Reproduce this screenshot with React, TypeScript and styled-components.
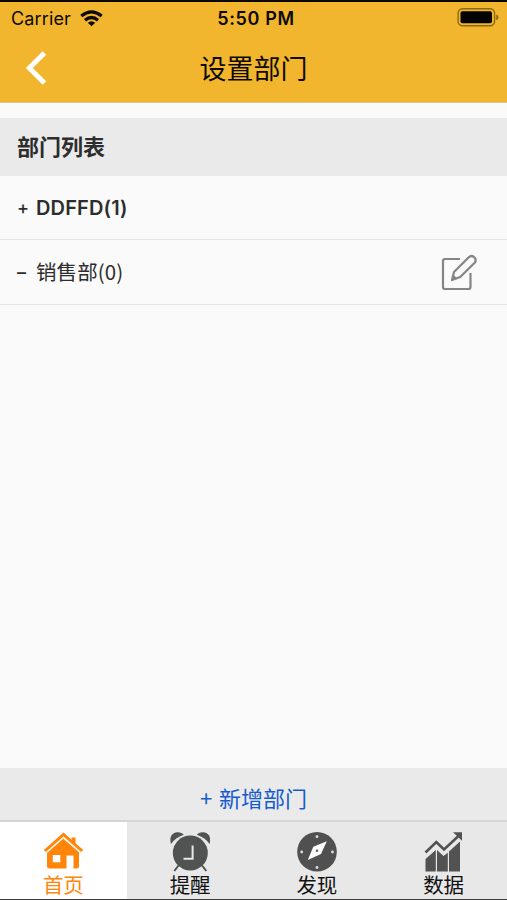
import React from "react";
import styled, { createGlobalStyle } from "styled-components";

const GlobalStyle = createGlobalStyle`
  * { box-sizing: border-box; }
  body { margin: 0; background: #fafafa; }
  svg { display: block; flex: none; }
`;

const cjk = `"Noto Sans CJK SC", sans-serif`;

const Screen = styled.div`
  display: flex;
  flex-direction: column;
  width: 507px;
  height: 900px;
  overflow: hidden;
  background: #fafafa;
  color: #2d2d2d;
  font-family: Inter, ${cjk};
  border-top: 2px solid #0c0700;
  border-bottom: 1px solid #3c3c3c;
`;

const Header = styled.header`
  height: 101px;
  flex: none;
  background: #f1b62d;
  border-bottom: 1px solid #dfc68d;
  color: #0d0900;
`;

const StatusBar = styled.div`
  display: grid;
  grid-template-columns: 1fr auto 1fr;
  align-items: center;
  height: 34px;
  padding: 0 8px 0 11px;
`;

const Carrier = styled.div`
  display: flex;
  align-items: center;
  gap: 9px;
  font-size: 18px;
  line-height: 34px;
  letter-spacing: 0.14px;

  svg {
    margin-bottom: 2px;
  }
`;

const Clock = styled.div`
  padding-left: 2px;
  font-size: 18px;
  font-weight: 600;
  line-height: 34px;
  letter-spacing: 0.65px;
`;

const BatterySlot = styled.div`
  justify-self: end;
  padding-bottom: 3px;
`;

const TitleBar = styled.div`
  display: grid;
  grid-template-columns: 72px 1fr 72px;
  align-items: center;
  height: 66px;
  padding-bottom: 2px;
`;

const BackButton = styled.button`
  display: flex;
  padding: 0 0 0 25px;
  border: 0;
  background: none;
`;

const Title = styled.h1`
  margin: 0;
  text-align: center;
  font: 400 27px/40px ${cjk};
`;

const SectionTitle = styled.h2`
  margin: 15px 0 0;
  padding: 0 17px;
  height: 58px;
  flex: none;
  background: #eaeaea;
  font: 700 22px/55px ${cjk};
`;

const Row = styled.div<{ $height: number; $strong?: boolean }>`
  display: flex;
  align-items: center;
  justify-content: space-between;
  height: ${(p) => p.$height}px;
  flex: none;
  padding: 0 30px 0 17px;
  border-bottom: 1px solid #e4e4e4;
  font-weight: ${(p) => (p.$strong ? 600 : 400)};
`;

const Label = styled.span<{ $cjk?: boolean }>`
  display: flex;
  align-items: center;
  padding-bottom: ${(p) => (p.$cjk ? 2 : 0)}px;
  font-size: ${(p) => (p.$cjk ? 20.5 : 20)}px;
  line-height: 30px;
  letter-spacing: ${(p) => (p.$cjk ? 0.1 : 0.15)}px;
  font-family: ${(p) => (p.$cjk ? cjk : `Inter, ${cjk}`)};
`;

const Sign = styled.span<{ $dash?: boolean }>`
  width: 19px;
  padding-top: ${(p) => (p.$dash ? 3 : 1)}px;
  font: 500 18px/30px Inter, sans-serif;
`;

const EditButton = styled.button`
  padding: 0;
  border: 0;
  background: none;
`;

const List = styled.main`
  flex: 1;
  display: flex;
  flex-direction: column;
`;

const AddButton = styled.button`
  height: 54px;
  flex: none;
  padding: 6px 0 0;
  border: 0;
  border-bottom: 2px solid #d5d5d5;
  background: #eaeaea;
  color: #155bd0;
  font: 400 22px/46px ${cjk};
  word-spacing: 2px;
`;

const TabBar = styled.nav`
  display: grid;
  grid-template-columns: repeat(4, 1fr);
  height: 77px;
  flex: none;
  background: #e8e8e8;
`;

const Tab = styled.div<{ $active?: boolean }>`
  display: flex;
  flex-direction: column;
  align-items: center;
  padding-top: 10px;
  background: ${(p) => (p.$active ? "#fff" : "transparent")};
  color: ${(p) => (p.$active ? "#ff850b" : "#111")};
  font: 400 20.5px/24px ${cjk};
`;

const WifiIcon = () => (
  <svg width="23" height="17" viewBox="0 0 23 17" fill="none" stroke="#0d0900" strokeWidth="3.3">
    <path d="M1.3 6Q11.5-2.2 21.7 6M5 10.3Q11.5 4.8 18 10.3" />
    <path d="M7.8 12.8Q11.5 9.6 15.2 12.8L11.5 16.3Z" fill="#0d0900" stroke="none" />
  </svg>
);

const BatteryIcon = () => (
  <svg width="42" height="19" viewBox="0 0 42 19">
    <rect x="1.1" y=".8" width="36.5" height="17" rx="4.5" fill="none" stroke="#8c6918" strokeWidth="1.4" />
    <rect x="3.5" y="3.3" width="31.5" height="12" rx="2" fill="#050300" />
    <path d="M39.2 6.5Q41.5 7.3 41.5 9.4T39.2 12.3Z" fill="#8c6918" />
  </svg>
);

const BackIcon = () => (
  <svg width="22" height="34" viewBox="0 0 22 34" fill="none" stroke="#fff" strokeWidth="5">
    <path d="M19.5 2L4.3 17L19.5 32" />
  </svg>
);

const EditIcon = () => (
  <svg width="37" height="37" viewBox="0 0 37 37" fill="none" stroke="#858585" strokeWidth="2.2" strokeLinejoin="round">
    <path d="M20 5H5Q3 5 3 7V33Q3 35 5 35H28.5Q30.5 35 30.5 33V19" />
    <path d="M12 26L14 18L28.8 3.3Q31.3 .8 34.1 3.1T34.7 8.8L20.2 23Z" />
    <path d="M11.5 26.5L13 20.5L17.5 24.5Z" fill="#858585" stroke="none" />
  </svg>
);

const HomeIcon = () => (
  <svg width="40" height="40" viewBox="0 0 40 40" fill="#ff850b">
    <path fillRule="evenodd" d="M4 20L20 6.5L36 20V34Q36 36.5 33.5 36.5H30.5V23.5H23.5V36.5H6.5Q4 36.5 4 34ZM9.8 23V30.2H17.3V23Z" />
    <path d="M28.5 5.5H32.5V14L28.5 10Z" />
    <path d="M2.5 20.2L20.5 4.4L38.5 20.2" fill="none" stroke="#fff3df" strokeWidth="3.2" />
    <path d="M1.8 19L20.5 2.5L39.2 19" fill="none" stroke="#ff850b" strokeWidth="3" />
  </svg>
);

const AlarmIcon = () => (
  <svg width="40" height="40" viewBox="0 0 40 40" fill="#505352">
    <circle cx="20.3" cy="21" r="17.5" />
    <path d="M1 12C-1 5 2 .7 7 .2C10-.1 12.5 1 13.8 2.8C8 4.7 4 7.7 1 12ZM39.6 12C41.6 5 38.6 .7 33.6 .2C30.6-.1 28.1 1 26.8 2.8C32.6 4.7 36.6 7.7 39.6 12Z" />
    <path d="M8.5 33.5L4.3 39M32.1 33.5L36.3 39" stroke="#505352" strokeWidth="2" />
    <path d="M22.6 13.5V26.7H13.5" fill="none" stroke="#e8e8e8" strokeWidth="2" />
  </svg>
);

const CompassIcon = () => (
  <svg width="40" height="40" viewBox="0 0 40 40">
    <circle cx="20" cy="19.8" r="19.8" fill="#505050" />
    <path d="M29.8 9.2L24 22L10.8 28L16.3 14.7Z" fill="#fff" />
    <g fill="#dedede">
      <circle cx="20" cy="4.7" r="1.4" />
      <circle cx="20" cy="35.5" r="1.4" />
      <circle cx="4.7" cy="20" r="1.4" />
      <circle cx="35.5" cy="20" r="1.4" />
    </g>
    <circle cx="20" cy="18.7" r="1.3" fill="#606060" />
  </svg>
);

const ChartIcon = () => (
  <svg width="40" height="40" viewBox="0 0 40 40" fill="#525252">
    <path d="M1.5 27L11.8 18V39.5H1.5ZM13 18L19.5 24L23.8 20.7V39.5H13ZM25 19.5L36 9.5V39.5H25Z" />
    <path d="M1.5 20.5L12.3 10L20 17.5L34.5 4" fill="none" stroke="#525252" strokeWidth="2.6" />
    <path d="M29 .2H38V8.7Z" />
  </svg>
);

const tabs = [
  { label: "首页", icon: <HomeIcon />, active: true },
  { label: "提醒", icon: <AlarmIcon /> },
  { label: "发现", icon: <CompassIcon /> },
  { label: "数据", icon: <ChartIcon /> },
];

export default function App() {
  return (
    <Screen>
      <GlobalStyle />
      <Header>
        <StatusBar>
          <Carrier>Carrier<WifiIcon /></Carrier>
          <Clock>5:50 PM</Clock>
          <BatterySlot><BatteryIcon /></BatterySlot>
        </StatusBar>
        <TitleBar>
          <BackButton aria-label="返回"><BackIcon /></BackButton>
          <Title>设置部门</Title>
        </TitleBar>
      </Header>
      <List>
        <SectionTitle>部门列表</SectionTitle>
        <Row $height={64} $strong>
          <Label><Sign>+</Sign>DDFFD(1)</Label>
        </Row>
        <Row $height={65}>
          <Label $cjk><Sign $dash>–</Sign>销售部(0)</Label>
          <EditButton aria-label="编辑"><EditIcon /></EditButton>
        </Row>
      </List>
      <AddButton>+ 新增部门</AddButton>
      <TabBar>
        {tabs.map((tab) => (
          <Tab key={tab.label} $active={tab.active}>
            {tab.icon}
            <span>{tab.label}</span>
          </Tab>
        ))}
      </TabBar>
    </Screen>
  );
}
